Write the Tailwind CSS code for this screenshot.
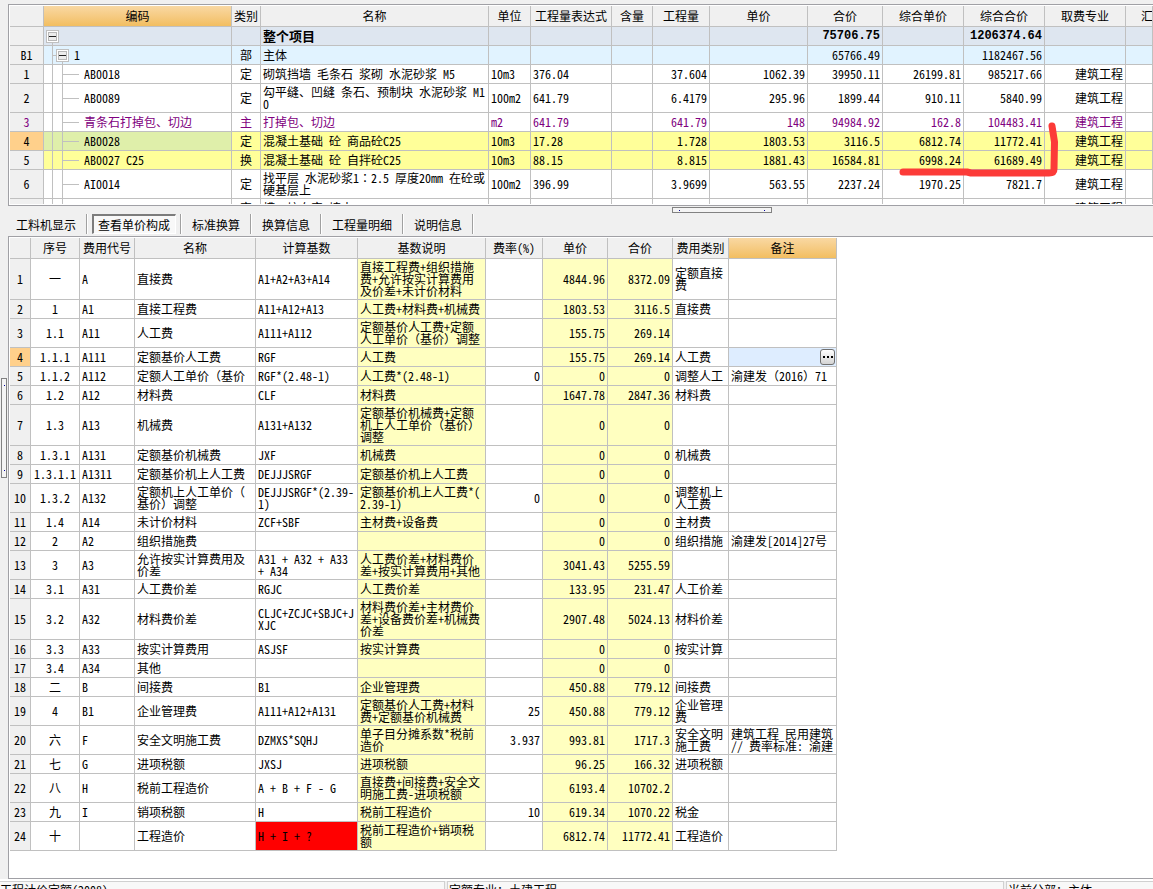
<!DOCTYPE html>
<html lang="zh-CN">
<head>
<meta charset="utf-8">
<meta name="viewport" content="width=device-width, initial-scale=1">
<title>工程计价</title>
<script src="https://cdn.jsdelivr.net/npm/@tailwindcss/browser@4"></script>
</head>
<body class="flex h-screen flex-col overflow-hidden bg-[#f0f0f0] font-['Noto_Sans_CJK_SC',sans-serif] text-[12px] leading-[12px] text-black [font-feature-settings:'hwid'_1]">

<main class="flex min-h-0 flex-1 flex-col pt-1 pl-2">
  <section class="relative h-[202px] shrink-0 border border-r-0 border-[#a0a0a5] bg-white p-px pr-0" aria-label="分部分项">
    <div class="h-full overflow-hidden">
      <table class="w-full min-w-[1143px] table-fixed border-separate border-spacing-0">
        <colgroup>
          <col class="w-[34px]"><col class="w-[188px]"><col class="w-[29px]"><col class="w-[228px]"><col class="w-[42px]"><col class="w-[81px]"><col class="w-[41px]"><col class="w-[57px]"><col class="w-[98px]"><col class="w-[75px]"><col class="w-[81px]"><col class="w-[81px]"><col class="w-[81px]"><col>
        </colgroup>
        <thead id="item-head"></thead>
        <tbody id="item-body"></tbody>
      </table>
    </div>
    <svg class="pointer-events-none absolute top-[116px] left-[888px]" width="164" height="56" viewBox="0 0 164 56" fill="none" stroke="#fc3b38" stroke-width="7" stroke-linecap="round" stroke-linejoin="round" aria-hidden="true"><path d="M6 51H70L74 52H152Q157 52 157 48L157.500 21L155 5"/></svg>
  </section>

  <div class="flex h-[7px] shrink-0 justify-start pt-px pl-[664px]">
    <div role="separator" class="flex h-[6px] w-[100px] items-center justify-between border border-[#828282] bg-[#f4f4f4] px-1.5"><i class="size-px bg-[#0000a0]"></i><i class="size-px bg-[#0000a0]"></i></div>
  </div>

  <nav id="tabs" class="flex h-[23px] shrink-0 items-start gap-1 pt-px pl-0.5"></nav>

  <section class="min-h-0 flex-1 overflow-hidden border border-r-0 border-[#a0a0a5] bg-white p-px" aria-label="查看单价构成">
    <table class="w-[827px] table-fixed border-separate border-spacing-0">
      <colgroup>
        <col class="w-[21px]"><col class="w-[49px]"><col class="w-[55px]"><col class="w-[121px]"><col class="w-[102px]"><col class="w-[128px]"><col class="w-[57px]"><col class="w-[65px]"><col class="w-[65px]"><col class="w-[56px]"><col class="w-[108px]">
      </colgroup>
      <thead id="fee-head"></thead>
      <tbody id="fee-body"></tbody>
    </table>
  </section>
</main>

<div role="separator" class="absolute top-[378px] left-px flex h-[100px] w-[6px] flex-col items-center justify-between border border-[#828282] bg-[#f4f4f4] py-1.5"><i class="size-px bg-[#0000a0]"></i><i class="size-px bg-[#0000a0]"></i></div>

<footer class="flex h-[10px] shrink-0 gap-0.5 overflow-hidden border-t-2 border-white bg-[#f0f0f0] whitespace-nowrap">
  <div class="w-[445px] border-t border-r border-[#d0d0d0] bg-[#f8f8f8] pt-0.5">工程计价定额(2008)</div>
  <div class="w-[557px] border border-b-0 border-[#d0d0d0] bg-[#f8f8f8] pt-0.5 pl-px [font-feature-settings:normal]">定额专业：土建工程</div>
  <div class="flex-1 border-t border-l border-[#d0d0d0] bg-[#f8f8f8] pt-0.5 pl-px [font-feature-settings:normal]">当前分部：主体</div>
</footer>

<script>
const LINE = 'border-r border-b border-[#c0c0c0] overflow-hidden p-0 ';
const HEAD = LINE + 'h-[21px] font-normal whitespace-nowrap text-center ';
const PLAIN_HEAD = HEAD + 'bg-[#f0f0f0]';
const ACTIVE_HEAD = HEAD + 'bg-linear-to-b from-[#f9d8a2] to-[#f2be60]';
const ROW_HEAD = 'bg-[#f0f0f0] text-center font-normal ';
const ROW_HEAD_ON = 'bg-[#ffd08b] text-center font-normal ';
const SIZE = { 19: 'h-[19px] ', 29: 'h-[29px] ', 41: 'h-[41px] ' };
const ALIGN = { c: 'text-center ', l: 'pl-0.5 text-left ', r: 'pr-0.5 text-right ' };
// Full-width brackets keep their full width; everything else in Latin is half-width.
const esc = s => String(s).replace(/&/g, '&amp;').replace(/</g, '&lt;').replace(/\n/g, '<br>')
  .replace(/[（）]/g, '<span class="[font-feature-settings:normal]">$&</span>');

const itemCols = ['', '编码', '类别', '名称', '单位', '工程量表达式', '含量', '工程量', '单价', '合价', '综合单价', '综合合价', '取费专业', '汇'];
document.getElementById('item-head').innerHTML = '<tr>' + itemCols.map((t, i) =>
  `<th scope="col" class="${i === 1 ? ACTIVE_HEAD : PLAIN_HEAD}">${i === 13 ? '<div class="pl-[15px] text-left">' + t + '</div>' : t}</th>`).join('') + '</tr>';

const TOGGLE = '<button type="button" aria-label="折叠" class="block size-[13px] shrink-0"><svg width="13" height="13" viewBox="0 0 13 13"><rect x=".5" y=".5" width="12" height="12" fill="#fff" stroke="#c0c0c0"/><rect x="2.500" y="2.500" width="8" height="8" fill="#ececec" stroke="#b8b8b8"/><path d="M3 6.500H10" stroke="#222"/></svg></button>';
const TREE = {
  root: '<div class="flex h-full flex-col pl-0.5"><div class="h-[3px]"></div>' + TOGGLE + '<div class="ml-1.5 w-px flex-1 bg-[#c0c0c0]"></div></div>',
  part: t => '<div class="flex h-full"><div class="w-[9px] shrink-0 border-r border-[#c0c0c0]"></div><div class="mt-[9px] h-px w-[3px] bg-[#c0c0c0]"></div><div class="flex flex-col pt-[3px]">' + TOGGLE + '<div class="ml-1.5 w-px flex-1 bg-[#c0c0c0]"></div></div><span class="self-center pl-[5px]">' + t + '</span></div>',
  leaf: t => '<div class="flex h-full items-center"><div class="h-full w-[9px] shrink-0 border-r border-[#c0c0c0]"></div><div class="h-full w-[10px] shrink-0 border-r border-[#c0c0c0]"></div><div class="h-px w-4 shrink-0 bg-[#c0c0c0]"></div><span class="pl-[5px] whitespace-nowrap">' + t + '</span></div>'
};
const items = [
  ['root', 19, 'bg-[#dee6f0] font-bold ', '', '', '', '整个项目', '', '', '', '', '', '75706.75', '', '1206374.64', ''],
  ['part', 19, 'bg-[#e1f3ff] ', 'B1', '1', '部', '主体', '', '', '', '', '', '65766.49', '', '1182467.56', ''],
  ['leaf', 19, '', '1', 'AB0018', '定', '砌筑挡墙 毛条石 浆砌 水泥砂浆 M5', '10m3', '376.04', '', '37.604', '1062.39', '39950.11', '26199.81', '985217.66', '建筑工程'],
  ['leaf', 29, '', '2', 'AB0089', '定', '勾平缝、凹缝 条石、预制块 水泥砂浆 M1\n0', '100m2', '641.79', '', '6.4179', '295.96', '1899.44', '910.11', '5840.99', '建筑工程'],
  ['leaf', 19, 'text-[#800080] ', '3', '青条石打掉包、切边', '主', '打掉包、切边', 'm2', '641.79', '', '641.79', '148', '94984.92', '162.8', '104483.41', '建筑工程'],
  ['leaf', 19, 'bg-[#ffff99] ', '4', 'AB0028', '定', '混凝土基础 砼 商品砼C25', '10m3', '17.28', '', '1.728', '1803.53', '3116.5', '6812.74', '11772.41', '建筑工程'],
  ['leaf', 19, 'bg-[#ffff99] ', '5', 'AB0027 C25', '换', '混凝土基础 砼 自拌砼C25', '10m3', '88.15', '', '8.815', '1881.43', '16584.81', '6998.24', '61689.49', '建筑工程'],
  ['leaf', 29, '', '6', 'AI0014', '定', '找平层 水泥砂浆1∶2.5 厚度20mm 在砼或\n硬基层上', '100m2', '396.99', '', '3.9699', '563.55', '2237.24', '1970.25', '7821.7', '建筑工程'],
  ['leaf', 19, '', '', '', '定', '槽、坑夯实 填土', '', '', '', '', '', '', '', '', '建筑工程']
];
const itemAlign = 'cclllllrrrrrr';
document.getElementById('item-body').innerHTML = items.map(([kind, h, tone, no, code, ...rest]) => {
  const picked = no === '4';
  const tint = no === '3' ? 'text-[#800080] ' : '';
  const tree = kind === 'root' ? TREE.root : TREE[kind](esc(code));
  const cells = rest.map((t, i) => {
    const face = kind !== 'root' ? '' : i === 1 ? 'text-[13px] ' : "font-['Liberation_Mono',monospace] ";
    return `<td class="${LINE + SIZE[h] + tone + face + ALIGN[i ? itemAlign[i + 2] : 'c']}whitespace-nowrap">${esc(t)}</td>`;
  }).join('');
  return `<tr><th scope="row" class="${LINE + SIZE[h] + tint + (picked ? ROW_HEAD_ON : ROW_HEAD)}">${no}</th>` +
    `<td class="${LINE + SIZE[h] + (picked ? 'bg-[#dfefaa]' : tone)}">${tree}</td>${cells}<td class="${LINE + SIZE[h] + tone}"></td></tr>`;
}).join('');

document.getElementById('tabs').innerHTML = ['工料机显示', '查看单价构成', '标准换算', '换算信息', '工程量明细', '说明信息'].map((t, i) =>
  `<button type="button" class="${i === 1
    ? 'h-5 border-t-2 border-l-2 border-r border-b border-t-[#7c7c7c] border-l-[#7c7c7c] border-r-white border-b-white bg-[#f8f8f8] pr-[5px] pl-1 pt-px'
    : 'h-5 px-1.5 pt-px'}">${t}</button><i class="h-5 w-0.5 border-r border-l border-l-[#a0a0a0] border-r-white"></i>`).join('');

const feeCols = ['', '序号', '费用代号', '名称', '计算基数', '基数说明', '费率(%)', '单价', '合价', '费用类别', '备注'];
document.getElementById('fee-head').innerHTML = '<tr>' + feeCols.map((t, i) =>
  `<th scope="col" class="${i === 10 ? ACTIVE_HEAD : PLAIN_HEAD}">${t}</th>`).join('') + '</tr>';

const fees = [
  [41, '一', 'A', '直接费', 'A1+A2+A3+A14', '直接工程费+组织措施\n费+允许按实计算费用\n及价差+未计价材料', '', '4844.96', '8372.09', '定额直接\n费', ''],
  [19, '1', 'A1', '直接工程费', 'A11+A12+A13', '人工费+材料费+机械费', '', '1803.53', '3116.5', '直接费', ''],
  [29, '1.1', 'A11', '人工费', 'A111+A112', '定额基价人工费+定额\n人工单价（基价）调整', '', '155.75', '269.14', '', ''],
  [19, '1.1.1', 'A111', '定额基价人工费', 'RGF', '人工费', '', '155.75', '269.14', '人工费', null],
  [19, '1.1.2', 'A112', '定额人工单价（基价', 'RGF*(2.48-1)', '人工费*(2.48-1)', '0', '0', '0', '调整人工', '渝建发（2016）71'],
  [19, '1.2', 'A12', '材料费', 'CLF', '材料费', '', '1647.78', '2847.36', '材料费', ''],
  [41, '1.3', 'A13', '机械费', 'A131+A132', '定额基价机械费+定额\n机上人工单价（基价）\n调整', '', '0', '0', '', ''],
  [19, '1.3.1', 'A131', '定额基价机械费', 'JXF', '机械费', '', '0', '0', '机械费', ''],
  [19, '1.3.1.1', 'A1311', '定额基价机上人工费', 'DEJJJSRGF', '定额基价机上人工费', '', '0', '0', '', ''],
  [29, '1.3.2', 'A132', '定额机上人工单价（\n基价）调整', 'DEJJJSRGF*(2.39-\n1)', '定额基价机上人工费*(\n2.39-1)', '0', '0', '0', '调整机上\n人工费', ''],
  [19, '1.4', 'A14', '未计价材料', 'ZCF+SBF', '主材费+设备费', '', '0', '0', '主材费', ''],
  [19, '2', 'A2', '组织措施费', '', '', '', '0', '0', '组织措施', '渝建发[2014]27号'],
  [29, '3', 'A3', '允许按实计算费用及\n价差', 'A31 + A32 + A33\n+ A34', '人工费价差+材料费价\n差+按实计算费用+其他', '', '3041.43', '5255.59', '', ''],
  [19, '3.1', 'A31', '人工费价差', 'RGJC', '人工费价差', '', '133.95', '231.47', '人工价差', ''],
  [41, '3.2', 'A32', '材料费价差', 'CLJC+ZCJC+SBJC+J\nXJC', '材料费价差+主材费价\n差+设备费价差+机械费\n价差', '', '2907.48', '5024.13', '材料价差', ''],
  [19, '3.3', 'A33', '按实计算费用', 'ASJSF', '按实计算费', '', '0', '0', '按实计算', ''],
  [19, '3.4', 'A34', '其他', '', '', '', '0', '0', '', ''],
  [19, '二', 'B', '间接费', 'B1', '企业管理费', '', '450.88', '779.12', '间接费', ''],
  [29, '4', 'B1', '企业管理费', 'A111+A12+A131', '定额基价人工费+材料\n费+定额基价机械费', '25', '450.88', '779.12', '企业管理\n费', ''],
  [29, '六', 'F', '安全文明施工费', 'DZMXS*SQHJ', '单子目分摊系数*税前\n造价', '3.937', '993.81', '1717.3', '安全文明\n施工费', '建筑工程 民用建筑\n// 费率标准: 渝建'],
  [19, '七', 'G', '进项税额', 'JXSJ', '进项税额', '', '96.25', '166.32', '进项税额', ''],
  [29, '八', 'H', '税前工程造价', 'A + B + F - G', '直接费+间接费+安全文\n明施工费-进项税额', '', '6193.4', '10702.2', '', ''],
  [19, '九', 'I', '销项税额', 'H', '税前工程造价', '10', '619.34', '1070.22', '税金', ''],
  [29, '十', '', '工程造价', 'H + I + ?', '税前工程造价+销项税\n额', '', '6812.74', '11772.41', '工程造价', '']
];
const feeAlign = 'cllllrrrll';
const EDITOR = '<div class="flex h-full items-center bg-[#deedff] pr-px"><input type="text" aria-label="备注" class="h-full min-w-0 flex-1 bg-transparent outline-none"><button type="button" aria-label="更多" class="flex h-4 w-[15px] items-center justify-center gap-0.5 rounded-[3px] border border-[#707070] bg-linear-to-b from-white to-[#d4d4d4]"><i class="size-0.5 bg-black"></i><i class="size-0.5 bg-black"></i><i class="size-0.5 bg-black"></i></button></div>';
document.getElementById('fee-body').innerHTML = fees.map(([h, ...row], r) => {
  const cells = row.map((t, i) => {
    const fill = i === 4 || i === 6 || i === 7 ? 'bg-[#ffffc0] ' : t === 'H + I + ?' ? 'bg-[#ff0000] ' : '';
    return t === null
      ? `<td class="${LINE + SIZE[h]}">${EDITOR}</td>`
      : `<td class="${LINE + SIZE[h] + fill + ALIGN[feeAlign[i]]}whitespace-nowrap">${esc(t)}</td>`;
  }).join('');
  return `<tr><th scope="row" class="${LINE + SIZE[h] + (r === 3 ? ROW_HEAD_ON : ROW_HEAD)}">${r + 1}</th>${cells}</tr>`;
}).join('');
</script>
</body>
</html>
